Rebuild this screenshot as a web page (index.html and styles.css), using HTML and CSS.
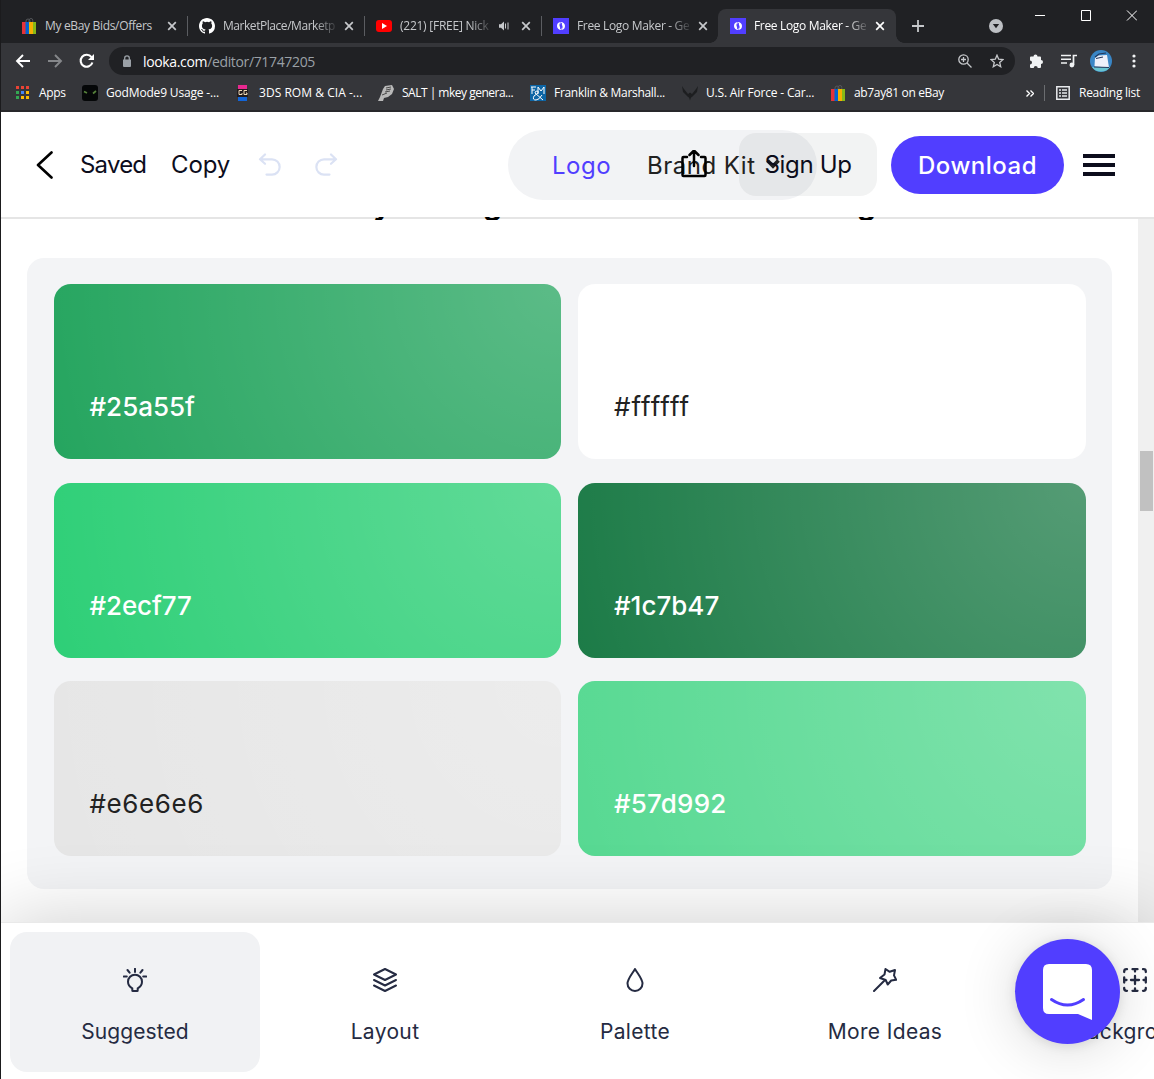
FILE: index.html
```html
<!DOCTYPE html>
<html lang="en">
<head>
<meta charset="utf-8">
<title>Free Logo Maker</title>
<link rel="stylesheet" href="styles.css">
</head>
<body>
<svg class="defs" width="0" height="0">
  <defs>
    <symbol id="bag" viewBox="0 0 16 16"><path d="M4 5V3q0-2 2-2t2 2v2M7 5V2.500q0-2 2-2t1.800 2V5" fill="none" stroke="#55575a"/><path fill="#e53238" d="M0 4h4v12H0z"/><path fill="#0064d2" d="M3.500 4H7v12H3.500z"/><path fill="#f5af02" d="M7 4h4v12H7z"/><path fill="#86b817" d="M11 4h3v12h-3z"/></symbol>
    <symbol id="x" viewBox="0 0 10 10"><path d="M1.200 1.200l7.600 7.600M8.800 1.200L1.200 8.800" stroke="currentColor" stroke-width="1.700"/></symbol>
    <symbol id="looka" viewBox="0 0 16 16"><path fill="#513eff" d="M0 0h16v16H0z"/><path fill="#fff" d="M7.500 4C5.200 4.300 4 5.800 4 8s1.500 4 4.500 4L7 10.500zM8.500 12c2.300-.3 3.500-1.800 3.500-4s-1.500-4-4.500-4L9 5.500z"/><path fill="#513eff" d="M6.500 5.500l3 2.200v2.800l-3-2.200z"/></symbol>
  </defs>
</svg>
<div class="window">
  <div class="tabs">
    <div class="tab"><svg class="fav"><use href="#bag"/></svg><span class="title t1">My eBay Bids/Offers</span><svg class="close"><use href="#x"/></svg></div>
    <div class="tab"><svg class="fav" viewBox="0 0 16 16"><path fill="#fff" d="M8 0C3.580 0 0 3.580 0 8c0 3.540 2.290 6.530 5.470 7.590.4.070.55-.17.55-.38 0-.19-.01-.82-.01-1.490-2.010.37-2.530-.49-2.690-.94-.09-.23-.48-.94-.82-1.130-.28-.15-.68-.52-.01-.53.63-.01 1.080.58 1.230.82.72 1.210 1.870.87 2.330.66.07-.52.28-.87.51-1.070-1.780-.2-3.640-.89-3.640-3.950 0-.87.31-1.590.82-2.150-.08-.2-.36-1.020.08-2.120 0 0 .67-.21 2.200.82a7.600 7.600 0 014 0c1.530-1.040 2.200-.82 2.200-.82.44 1.100.16 1.920.08 2.120.51.56.82 1.270.82 2.150 0 3.070-1.870 3.750-3.650 3.950.29.25.54.73.54 1.480 0 1.070-.01 1.930-.01 2.200 0 .21.15.46.55.38A8 8 0 0016 8c0-4.420-3.580-8-8-8z"/></svg><span class="title t2 fade">MarketPlace/Marketp</span><svg class="close"><use href="#x"/></svg></div>
    <div class="tab"><svg class="fav" viewBox="0 0 16 16"><rect y="2" width="16" height="12" rx="3" fill="#f00"/><path d="M6 5v6l5-3z" fill="#fff"/></svg><span class="title t3 fade short">(221) [FREE] Nick</span><svg class="sound" viewBox="0 0 10 10"><path fill="#c6c8cb" d="M0 3.300h2L5 .5v9L2 6.700H0z"/><path d="M6.500 2.500v5M9 1.500v7" stroke="#c6c8cb"/></svg><svg class="close"><use href="#x"/></svg></div>
    <div class="tab last"><svg class="fav"><use href="#looka"/></svg><span class="title t4 fade">Free Logo Maker - Ge</span><svg class="close"><use href="#x"/></svg></div>
    <div class="tab active"><svg class="fav"><use href="#looka"/></svg><span class="title t4 fade">Free Logo Maker - Ge</span><svg class="close"><use href="#x"/></svg></div>
    <svg class="plus" viewBox="0 0 12 12"><path d="M6 0v12M0 6h12" stroke="#c6c8cb" stroke-width="1.800"/></svg>
    <svg class="search" viewBox="0 0 14 14"><circle cx="7" cy="7" r="7" fill="#bdc0c4"/><path d="M3.800 5h6.400L7 9.300z" fill="#202124"/></svg>
    <div class="controls"><svg viewBox="0 0 102 11" width="102" height="11"><path d="M0 5.500h10" stroke="#fff"/><path d="M46.500.5h9v10h-9zM92 .5l10 10M102 .5l-10 10" stroke="#fff" fill="none"/></svg></div>
  </div>
  <div class="toolbar">
    <svg class="nav" width="80" height="16" viewBox="0 0 80 16"><path d="M15 8H2m6-6L2 8l6 6" fill="none" stroke="#fff" stroke-width="1.900"/><path d="M33 8h13m-6-6 6 6-6 6" fill="none" stroke="#85878a" stroke-width="1.900"/><path d="M76.500 4.200a6 6 0 10.900 5.300" fill="none" stroke="#fff" stroke-width="2.100"/><path d="M79 1v6h-6z" fill="#fff"/></svg>
    <div class="address"><svg width="8" height="12" viewBox="0 0 8 12"><path fill="#9aa0a6" d="M0 4.500h8V11q0 1-1 1H1q-1 0-1-1z"/><path d="M1.700 5V3Q1.700.8 4 .8T6.300 3v2" stroke="#9aa0a6" stroke-width="1.300" fill="none"/></svg><span class="url"><b>looka.com</b>/editor/71747205</span>
      <svg class="mag" width="14" height="14" viewBox="0 0 14 14"><g fill="none" stroke="#c6c8cb" stroke-width="1.300"><circle cx="5.500" cy="5.500" r="4.700"/><path d="M9 9l4.500 4.500M5.500 3v5M3 5.500h5"/></g></svg>
      <svg class="star" width="14" height="14" viewBox="0 0 14 14"><path d="M7 1.200l1.700 4 4.300.4-3.300 2.800 1 4.300L7 10.400l-3.700 2.300 1-4.300L1 5.600l4.300-.4z" fill="none" stroke="#c6c8cb" stroke-width="1.300"/></svg></div>
    <svg class="ext" width="15" height="15" viewBox="0 0 15 15"><path fill="#f1f3f4" d="M4.500 2.500a2 2 0 014 0H11q1 0 1 1V6a2 2 0 010 4v3q0 1-1 1H8.700a2 2 0 00-4 0H2q-1 0-1-1v-2.600a2 2 0 000-4V3.500q0-1 1-1z"/></svg>
    <svg class="music" width="16" height="14" viewBox="0 0 16 14"><path d="M0 1.500h10M0 5.300h10M0 9h6" stroke="#f1f3f4" stroke-width="1.600"/><path d="M12.500 11V1.500H16" fill="none" stroke="#f1f3f4" stroke-width="1.700"/><circle cx="10.900" cy="11" r="2.400" fill="#f1f3f4"/></svg>
    <svg class="avatar" width="22" height="22" viewBox="0 0 22 22"><circle cx="11" cy="11" r="11" fill="#3986c6"/><path d="M2 17h18q-3 4.500-9 4.500T2 17z" fill="#68c4d1"/><path d="M5 8l3.500-2.500L17 5l2 12.500L4.500 16.500z" fill="#edf0fa"/><path d="M5 7l4-3 7-1M4 17l15 .5M6 8.500l7-1.500" stroke="#23375b" stroke-width="1.100" fill="none"/></svg>
    <svg class="dots" width="4" height="14" viewBox="0 0 4 14"><g fill="#f1f3f4"><circle cx="2" cy="2" r="1.600"/><circle cx="2" cy="7" r="1.600"/><circle cx="2" cy="12" r="1.600"/></g></svg>
  </div>
  <div class="bookmarks">
    <div class="bm"><svg class="fav" viewBox="0 0 16 16"><path fill="#ea4335" d="M2 1h3v3H2zM7 1h3v3H7zM12 1h3v3h-3z"/><path fill="#34a853" d="M2 6h3v3H2zM2 11h3v3H2z"/><path fill="#4285f4" d="M7 6h3v3H7z"/><path fill="#fbbc04" d="M12 6h3v3h-3zM7 11h3v3H7zM12 11h3v3h-3z"/></svg><span class="b0">Apps</span></div>
    <div class="bm"><svg class="fav" viewBox="0 0 16 16"><rect width="16" height="16" rx="3" fill="#050708"/><path d="M2 6.500l3 1.500M14 6l-3 2.500" stroke="#55803a" stroke-width="1.700"/></svg><span class="b1">GodMode9 Usage -...</span></div>
    <div class="bm"><svg class="fav" viewBox="0 0 16 16"><path fill="#e8288f" d="M3 0h9v4H3z"/><path fill="#211b1c" d="M2 4h11v8H2z"/><path fill="#1265d8" d="M3 12h9v4H3z"/><path d="M7 5.500H4v4h3V8M12 5.500H9v4h3V8h-1" stroke="#efd9b6" fill="none"/></svg><span class="b2">3DS ROM &amp; CIA -...</span></div>
    <div class="bm"><svg class="fav" viewBox="0 0 16 16"><path fill="#b9b9b9" d="M7 1l7-1 2 4-2 5-4 3-4 1-1 3H0l2-4 3-8z"/><path d="M8 3l5-1M8 5l5-1M7 7l5-1M4 10l5-2" stroke="#4a4a4a"/></svg><span class="b3">SALT | mkey genera...</span></div>
    <div class="bm"><svg class="fav" viewBox="0 0 16 16"><path fill="#0c65a5" d="M0 0h16v16H0z"/><path d="M1 2h5M2 2v7M2 5h3M8 9V2l3 4 3-4v7M13 15L5 8q0-2 2-2t1 2l-4 3q-2 4 2 4 3 0 6-5" stroke="#fff" fill="none"/></svg><span class="b4">Franklin &amp; Marshall...</span></div>
    <div class="bm"><svg class="fav" viewBox="0 0 16 16"><path fill="#1d1e20" d="M0 1l2 3 4 5 2-1.500L10 9l4-5 2-3-1 6-4 4-1 1-1 .500-1 3-1-3L6 12l-1-1-4-4z"/></svg><span class="b5">U.S. Air Force - Car...</span></div>
    <div class="bm shift"><svg class="fav"><use href="#bag"/></svg><span class="b6">ab7ay81 on eBay</span></div>
    <div class="reading"><svg width="8" height="7" viewBox="0 0 8 7"><path d="M.5.500l3 3-3 3M4.500.500l3 3-3 3" fill="none" stroke="#fff" stroke-width="1.400"/></svg><i></i><svg width="14" height="14" viewBox="0 0 14 14"><path d="M.8.800h12.400v12.400H.8z" fill="none" stroke="#e8eaed" stroke-width="1.500"/><path d="M3 4h2m1 0h5M3 7h2m1 0h5M3 10h2m1 0h5" stroke="#e8eaed" stroke-width="1.300"/></svg><span class="b7">Reading list</span></div>
  </div>
  <div class="app">
    <header class="header">
      <div class="switch"><span class="logo">Logo</span><span class="kit">Brand Kit</span><svg width="16" height="12" viewBox="0 0 16 12"><path d="M2.500 2.500L8 8l5.500-5.500" fill="none" stroke="#222" stroke-width="3.800"/></svg></div>
      <svg class="back" width="18" height="28" viewBox="0 0 18 28"><path d="M15.500 1.500L2 14l13.500 12.500" fill="none" stroke="#000" stroke-width="2.600" stroke-linecap="round" stroke-linejoin="round"/></svg>
      <span class="saved">Saved</span><span class="copy">Copy</span>
      <svg class="undo" width="24" height="24" viewBox="0 0 24 24"><path d="M7 1.500L2 6.300l5 4.500M2.500 6.300H14a7.500 7.500 0 010 15.300H8.500" fill="none" stroke="#dbe2f4" stroke-width="2.200" stroke-linecap="round" stroke-linejoin="round"/></svg>
      <svg class="redo" width="24" height="24" viewBox="0 0 24 24"><path d="M17 1.500l5 4.800-5 4.500M21.500 6.300H10a7.500 7.500 0 000 15.300h5.500" fill="none" stroke="#dbe2f4" stroke-width="2.200" stroke-linecap="round" stroke-linejoin="round"/></svg>
      <svg class="share" width="26" height="30" viewBox="0 0 26 30"><path d="M6 7H2.500q-1 0-1 1v17q0 1 1 1h21q1 0 1-1V8q0-1-1-1H20M13 16V.8M8.500 5L13 .5 17.500 5" fill="none" stroke="#000" stroke-width="2.500" stroke-linecap="round" stroke-linejoin="round"/></svg>
      <button class="signup">Sign Up</button>
      <button class="download">Download</button>
      <div class="menu"><i></i><i></i><i></i></div>
    </header>
    <main class="content">
      <div class="heading"><span>y</span><span>g</span><span>g</span></div>
      <section class="palette">
        <div class="card c1"><span>#25a55f</span></div>
        <div class="card c2 dark"><span>#ffffff</span></div>
        <div class="card c3"><span>#2ecf77</span></div>
        <div class="card c4"><span>#1c7b47</span></div>
        <div class="card c5 dark"><span>#e6e6e6</span></div>
        <div class="card c6"><span>#57d992</span></div>
      </section>
      <div class="scrollbar"><div class="thumb"></div></div>
    </main>
    <nav class="bottom">
      <div class="item on"><svg viewBox="0 0 24 24"><path d="M9.300 22.500v-2.200C7 19 5 17 5 13.700a7 7 0 0114 0c0 3.300-2 5.300-4.300 6.600v2.200q0 .5-.5.500H9.800q-.5 0-.5-.5zM12 .8V4M4.500 2L6.600 4.600M19.500 2l-2.100 2.600M.8 8.500h3M20.200 8.500h3"/></svg><span class="n1">Suggested</span></div>
      <div class="item"><svg viewBox="0 0 24 24"><path d="M12 1l11 5.500L12 12 1 6.500zM1 12l11 5.500L23 12M1 17.500L12 23l11-5.500"/></svg><span class="n2">Layout</span></div>
      <div class="item"><svg viewBox="0 0 24 24"><path d="M12 1c3 5 7.500 10 7.500 14.500a7.500 7.500 0 01-15 0C4.500 11 9 6 12 1z"/></svg><span class="n3">Palette</span></div>
      <div class="item"><svg viewBox="0 0 24 24"><path d="M1 23l10.500-10.500M12.500 1l4.200 2.800L22 2l-1 5.400 2.200 4.400-5 .7-3.500 4-2-4.500L7 10l4.500-3.500z"/></svg><span class="n4">More Ideas</span></div>
      <div class="item"><svg class="grid" viewBox="0 0 24 24"><path d="M1.200 4V3.500q0-2.300 2.300-2.300H4M20 1.200h.5q2.300 0 2.300 2.300V4M22.800 20v.5q0 2.300-2.300 2.300H20M4 22.800h-.5q-2.300 0-2.300-2.300V20M9.500 1.200h5M9.500 22.800h5M1.200 9.500v5M22.800 9.500v5M12 1v2.500M12 20.500v2.500M1 12h2.500M20.500 12h2.500M12 8v8M8 12h8"/></svg><span class="n5">Background</span></div>
    </nav>
  </div>
  <div class="chat"><svg width="50" height="58" viewBox="0 0 50 58"><path fill="#fff" d="M6 1h37q6 0 6 6v50l-14-6H6q-6 0-6-6V7q0-6 6-6z"/><path d="M8.500 36.500q16 11 32 0" fill="none" stroke="#513eff" stroke-width="3" stroke-linecap="round"/></svg></div>
</div>
</body>
</html>
```
FILE: styles.css
```css
* { box-sizing: border-box; }
body { margin: 0; width: 1154px; height: 1079px; overflow: hidden; font-family: Inter, "Liberation Sans", sans-serif; background: #fff; }
svg { display: block; flex: none; }
.defs { position: absolute; }
.window { position: relative; height: 1079px; display: flex; flex-direction: column; border-left: 1px solid #1b1b1d; overflow: hidden; }
.tabs, .toolbar, .bookmarks { font-family: "Open Sans", "Noto Sans", sans-serif; font-size: 12px; color: #fff; white-space: nowrap; flex: none; display: flex; align-items: center; }
.tabs { height: 43px; background: #202124; padding: 9px 0 0 9px; color: #c6c8cb; }
.tab { width: 177px; height: 34px; display: flex; align-items: center; padding-left: 12px; position: relative; flex: none; }
.tab:not(.active):not(.last)::after { content: ""; position: absolute; right: -1px; top: 7px; width: 1px; height: 20px; background: #5b5d61; }
.tab.active { background: #35363a; border-radius: 8px 8px 0 0; color: #fff; width: 178px; }
.tab.active::before, .tab.active::after { content: ""; position: absolute; bottom: 0; width: 8px; height: 8px; }
.tab.active::before { left: -8px; background: radial-gradient(circle at 0 0, #202124 7.500px, #35363a 8px); }
.tab.active::after { right: -8px; background: radial-gradient(circle at 100% 0, #202124 7.500px, #35363a 8px); }
.fav { width: 16px; height: 16px; }
.title { margin-left: 8px; width: 112px; padding-bottom: 1px; }
.title.t1 { margin-left: 7px; width: 113px; }
.title.short { width: 90px; }
.fade { -webkit-mask-image: linear-gradient(90deg, #000 calc(100% - 20px), transparent calc(100% + 4px)); mask-image: linear-gradient(90deg, #000 calc(100% - 20px), transparent calc(100% + 4px)); }
.close { width: 10px; height: 10px; margin-left: 9px; }
.sound { width: 10px; height: 10px; margin-left: 9px; }
.sound + .close { margin-left: 12px; }
.plus { width: 12px; height: 12px; margin-left: 16px; }
.search { width: 14px; height: 14px; margin-left: 65px; }
.controls { margin-left: 32px; margin-top: -22px; }
.toolbar { height: 36px; background: #35363a; padding-left: 14px; }
.address { width: 906px; height: 28px; margin-left: 14px; border-radius: 14px; background: #202124; display: flex; align-items: center; padding-left: 14px; }
.url { font-size: 14px; color: #9aa0a6; margin-left: 12px; letter-spacing: -.35px; }
.url b { font-weight: 400; color: #fff; }
.mag { margin-left: auto; }
.star { margin: 0 11px 0 18px; }
.ext { margin-left: 14px; }
.music { margin-left: 17px; }
.avatar { margin-left: 13px; }
.dots { margin-left: 20px; }
.bookmarks { height: 33px; background: #35363a; border-bottom: 2px solid #28282b; padding: 0 14px 3px 13px; display: grid; grid-template-columns: 68px 153px 143px 152px 152px 148px 1fr auto; }
.bm { display: flex; gap: 8px; align-items: center; width: 0; }
.bm.shift { margin-left: 1px; gap: 7px; }
.bm span { padding-bottom: 1px; }
.reading { display: flex; align-items: center; }
.reading i { width: 1px; height: 16px; background: #6b6d70; margin: 0 11px 0 10px; }
.reading span { margin-left: 9px; padding-bottom: 1px; }
.t1, .t4 { letter-spacing: -.33px; }
.t2 { letter-spacing: -.45px; }
.t3 { letter-spacing: -.25px; }
.bookmarks span { letter-spacing: -.35px; }
.bookmarks .b0 { margin-left: 1px; }
.bookmarks .b1 { letter-spacing: -.17px; }
.bookmarks .b2 { letter-spacing: .04px; }
.bookmarks .b3 { letter-spacing: -.5px; }
.bookmarks .b4 { letter-spacing: -.3px; }
.bookmarks .b5 { letter-spacing: -.2px; }
.bookmarks .b7 { letter-spacing: -.27px; }
.app { flex: 1; display: flex; flex-direction: column; min-height: 0; }
.header { height: 107px; flex: none; display: flex; align-items: center; position: relative; padding-left: 35px; border-bottom: 2px solid #e5e5e5; font-size: 24px; color: #0c0d1c; background: #fff; }
.header > * { position: relative; flex: none; }
.header .switch { position: absolute; left: 507px; top: 18px; width: 309px; height: 70px; border-radius: 35px; background: #f2f3f5; display: flex; align-items: center; padding-left: 44px; color: #222; }
.switch .logo { color: #513eff; width: 95px; letter-spacing: .5px; }
.switch .kit { width: 118px; letter-spacing: .5px; }
.switch svg { margin-bottom: 2px; }
.saved { width: 91px; margin-left: 26px; letter-spacing: -.8px; }
.copy { width: 87px; letter-spacing: -.1px; }
.redo { margin-left: 32px; }
.share { margin-left: 343px; }
button { font: inherit; border: 0; padding: 0; color: inherit; }
.signup { width: 138px; height: 63px; border-radius: 17px; background: rgba(0,10,20,.05); margin-left: 32px; letter-spacing: -.35px; }
.download { width: 173px; height: 58px; border-radius: 29px; background: #513eff; color: #fff; font-weight: 500; margin-left: 14px; letter-spacing: .5px; padding-top: 1px; }
.menu { width: 32px; margin-left: 19px; display: grid; gap: 5px; }
.menu i { height: 4px; background: #0c0d1c; }
.content { position: relative; flex: 1; min-height: 0; padding: 0 16px 0 26px; }
.heading { height: 39px; display: flex; }
.heading span { position: absolute; top: -2px; left: 372px; height: 3px; display: flex; align-items: flex-end; overflow: hidden; font-size: 30px; font-weight: 700; line-height: 31px; }
.heading span:nth-child(2) { left: 482px; }
.heading span:nth-child(3) { left: 856px; }
.palette { width: 1085px; height: 631px; border-radius: 17px; background: #f3f4f6; padding: 26px 26px 33px 27px; display: grid; grid-template-columns: 507px 508px; grid-auto-rows: 175px; gap: 23.500px 17px; }
.card { border-radius: 17px; display: flex; align-items: flex-end; padding: 0 35.500px 36px; font-size: 26px; line-height: 32px; font-weight: 500; color: #fff; background-image: radial-gradient(circle at 100% 0, rgba(255,255,255,.25), rgba(255,255,255,0)); }
.card:nth-child(even) { padding-left: 36px; }
.dark { color: #222; font-weight: 400; }
.c1 { background-color: #25a55f; }
.c2 { background-color: #fff; letter-spacing: 1px; }
.c3 { background-color: #2ecf77; letter-spacing: -.1px; }
.c4 { background-color: #1c7b47; }
.c5 { background-color: #e6e6e6; letter-spacing: .6px; }
.c6 { background-color: #57d992; letter-spacing: .2px; }
.scrollbar { position: absolute; right: 0; top: 0; width: 16px; height: 100%; background: #f0f0f0; padding: 232px 1px 0 2px; }
.thumb { height: 60px; background: #c1c1c1; }
.bottom { position: relative; height: 157px; flex: none; background: #fff; box-shadow: 0 0 80px rgba(0,0,0,.2); display: flex; padding: 9px 0 0 9px; border-top: 1px solid #e9e9e9; }
.item { width: 250px; height: 140px; flex: none; border-radius: 17px; display: flex; flex-direction: column; align-items: center; padding-top: 36px; font-size: 21px; line-height: 28px; color: #252b42; letter-spacing: .35px; }
.item.on { background: #f1f2f4; }
.item .n1 { letter-spacing: .1px; }
.item svg { width: 24px; height: 24px; margin-bottom: 26px; fill: none; stroke: #252b42; stroke-width: 2; stroke-linejoin: round; stroke-linecap: round; }
.item .grid { stroke-width: 2.300; }
.chat { position: absolute; left: 1014px; top: 939px; width: 105px; height: 105px; border-radius: 50%; background: #513eff; box-shadow: 0 2px 12px rgba(0,0,0,.1), 0 4px 60px rgba(0,0,0,.16); display: grid; place-items: center; z-index: 2; }
```
